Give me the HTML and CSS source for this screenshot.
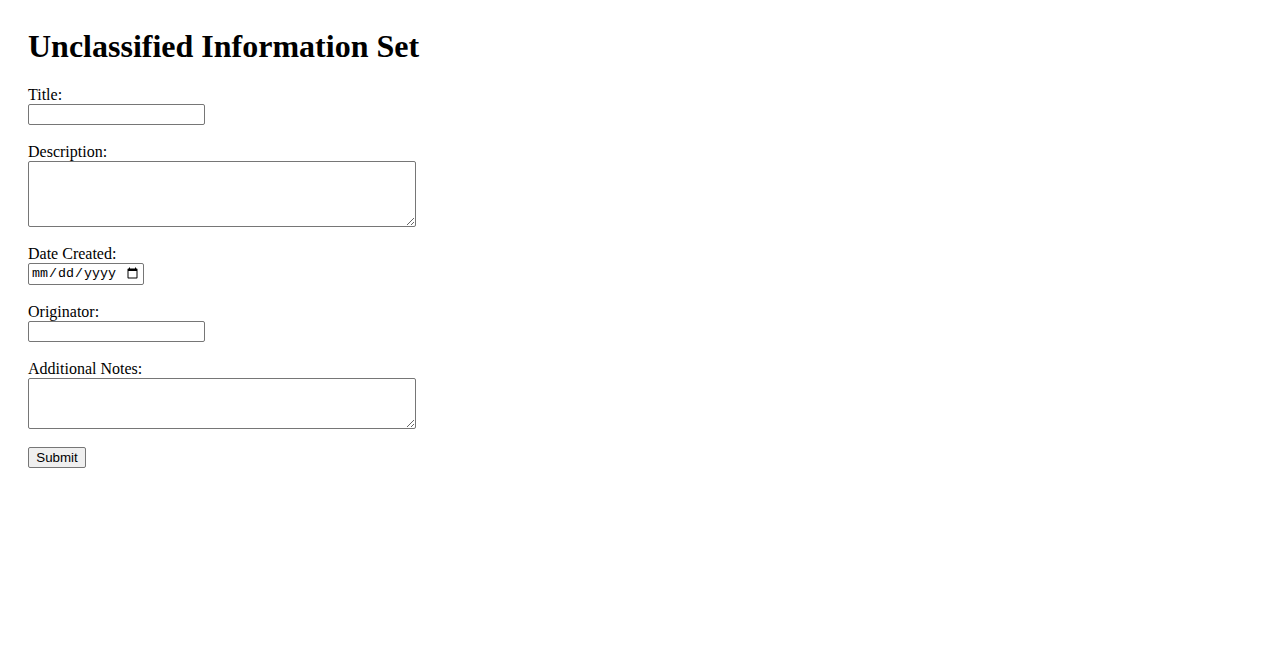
FILE: index.html
```html
<!DOCTYPE html>
<html lang="en">
<head>
<meta charset="utf-8">
<title>Unclassified Information Set</title>
<link rel="stylesheet" href="styles.css">
</head>
<body>
<div class="page">
  <h1 class="title">Unclassified Information Set</h1>
  <form class="form">
    <div class="field">
      <label class="label" for="title">Title:</label>
      <input class="text-input" type="text" id="title" name="title">
    </div>
    <div class="field">
      <label class="label" for="description">Description:</label>
      <textarea class="area area-lg" id="description" name="description"></textarea>
    </div>
    <div class="field">
      <label class="label" for="date">Date Created:</label>
      <input class="date-input" type="date" id="date" name="date">
    </div>
    <div class="field">
      <label class="label" for="originator">Originator:</label>
      <input class="text-input" type="text" id="originator" name="originator">
    </div>
    <div class="field">
      <label class="label" for="notes">Additional Notes:</label>
      <textarea class="area area-sm" id="notes" name="notes"></textarea>
    </div>
    <button class="submit" type="submit">Submit</button>
  </form>
</div>
</body>
</html>
```

FILE: styles.css
```css
html, body {
  margin: 0;
  padding: 0;
  background: #ffffff;
}

body {
  font-family: "Liberation Serif", "Times New Roman", serif;
  font-size: 16px;
  color: #000000;
}

.page {
  padding: 28px;
}

.title {
  margin: 0 0 21px 0;
  height: 37px;
  line-height: 37px;
  font-size: 32px;
  font-weight: bold;
}

.field {
  margin-bottom: 18px;
}

.label {
  display: block;
  height: 18px;
  line-height: 18px;
}

.text-input,
.date-input,
.area {
  display: block;
  box-sizing: border-box;
  margin: 0;
  border: 1px solid #767676;
  border-radius: 2px;
  background: #ffffff;
}

.text-input {
  width: 177px;
  height: 21px;
  font-family: "Liberation Sans", Arial, sans-serif;
  font-size: 13.33px;
  padding: 1px 2px;
}

.date-input {
  width: 116px;
  height: 22px;
  font-family: "Liberation Mono", "DejaVu Sans Mono", monospace;
  font-size: 13.33px;
  padding: 1px 2px;
}

.area {
  width: 388px;
  padding: 2px;
  font-family: "Liberation Mono", monospace;
  font-size: 13.33px;
  resize: both;
}

.area-lg {
  height: 66px;
}

.area-sm {
  height: 51px;
}

.submit {
  display: block;
  box-sizing: border-box;
  width: 58px;
  height: 21px;
  margin: 0;
  padding: 1px 6px;
  font-family: "Liberation Sans", Arial, sans-serif;
  font-size: 13.33px;
  color: #000000;
  background: #efefef;
  border: 1px solid #767676;
  border-radius: 2px;
}
```
